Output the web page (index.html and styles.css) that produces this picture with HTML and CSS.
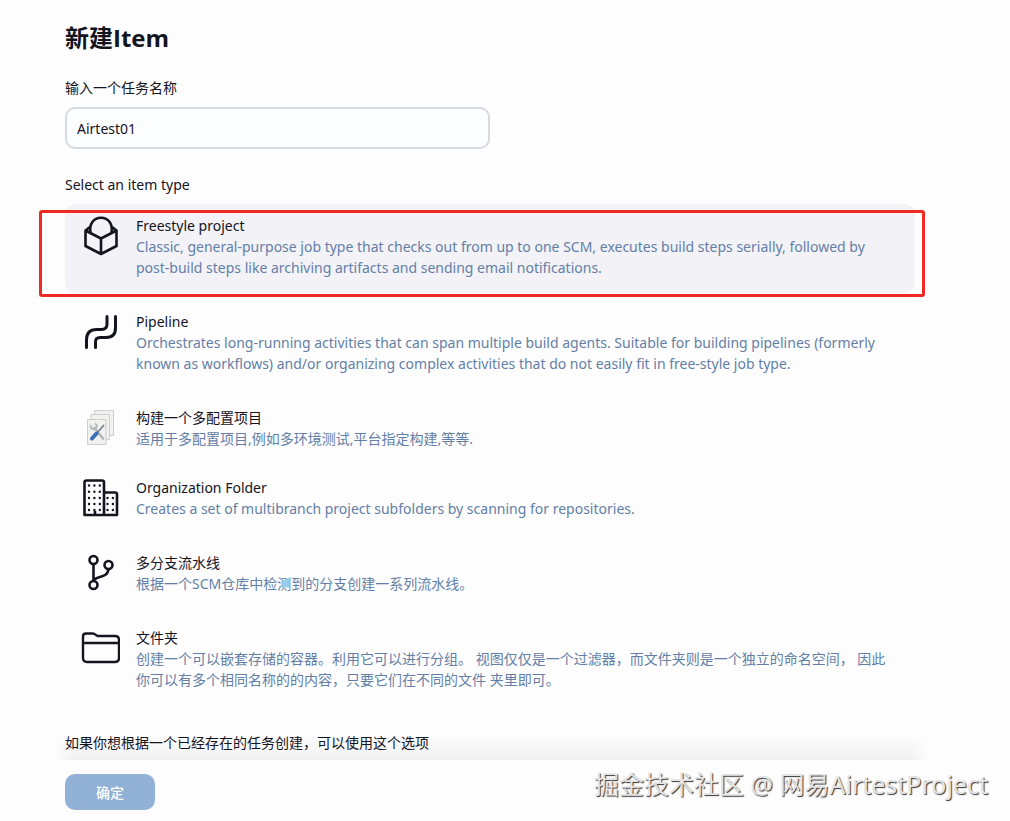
FILE: index.html
```html
<!DOCTYPE html>
<html lang="zh-CN">
	<head>
		<meta charset="UTF-8">
		<title>新建Item</title>
		<link rel="stylesheet" href="styles.css">
	</head>
	<body>
		<form class="new-item">
			<h1>新建Item</h1>

			<label class="caption" for="name">输入一个任务名称</label>
			<input class="name" type="text" id="name" name="name" value="Airtest01">

			<h2 class="caption" id="types">Select an item type</h2>
			<ul class="items" aria-labelledby="types">
				<li class="item active">
					<input type="radio" name="mode" value="freestyle" id="mode_freestyle" checked>
					<label for="mode_freestyle">
						<svg class="icon" viewBox="0 0 40 40" fill="none" stroke="#14141f" stroke-width="2.6" stroke-linejoin="round">
							<path d="M10.500 16.500C9 8 13.500 1.800 21 1.800S33 8 31.500 16.500"/>
							<path d="M10 11l-4.500 3.500V30L21 38l15.500-8V14.500L32 11M5.500 14.500L21 22.500l15.500-8M21 22.500V38"/>
						</svg>
						<span class="text">
							<span class="title">Freestyle project</span>
							<span class="desc">Classic, general-purpose job type that checks out from up to one SCM, executes build steps serially, followed by post-build steps like archiving artifacts and sending email notifications.</span>
						</span>
					</label>
				</li>
				<li class="item">
					<input type="radio" name="mode" value="pipeline" id="mode_pipeline">
					<label for="mode_pipeline">
						<svg class="icon" viewBox="0 0 40 40" fill="none" stroke="#14141f" stroke-width="3" stroke-linecap="round">
							<path d="M6.500 35.500V28q0-10.500 10-10.500h5q5.500 0 5.500-5.500V4.500"/>
							<path d="M15.500 35.500V30q0-4.500 4.500-4.500h6q9.500 0 9.500-9.500V4.500"/>
						</svg>
						<span class="text">
							<span class="title">Pipeline</span>
							<span class="desc">Orchestrates long-running activities that can span multiple build agents. Suitable for building pipelines (formerly known as workflows) and/or organizing complex activities that do not easily fit in free-style job type.</span>
						</span>
					</label>
				</li>
				<li class="item compact">
					<input type="radio" name="mode" value="matrix" id="mode_matrix">
					<label for="mode_matrix">
						<svg class="icon" viewBox="0 0 40 40" fill="none">
							<g fill="#f1f1f0" stroke="#c4c4c4" stroke-width="0.8">
								<path d="M14.500 2.500h19v25h-19z"/>
								<path d="M11 6.500h18.500v25H11z"/>
								<path d="M7.500 11.500h18.500v25H7.500z"/>
							</g>
							<path d="M14.500 20l8.500 10.500" stroke="#b4b7ba" stroke-width="2.600" stroke-linecap="round"/>
							<path d="M11 17a3 3 0 1 0 4-1.500" stroke="#b4b7ba" stroke-width="1.800"/>
							<path d="M24 17l-7 8" stroke="#777c82" stroke-width="1.600"/>
							<path d="M16.500 25.500l-4.500 5" stroke="#3d6db5" stroke-width="4" stroke-linecap="round"/>
						</svg>
						<span class="text">
							<span class="title">构建一个多配置项目</span>
							<span class="desc">适用于多配置项目,例如多环境测试,平台指定构建,等等.</span>
						</span>
					</label>
				</li>
				<li class="item">
					<input type="radio" name="mode" value="organization" id="mode_organization">
					<label for="mode_organization">
						<svg class="icon" viewBox="0 0 40 40" fill="none" stroke="#14141f" stroke-width="2.600" stroke-linejoin="round">
							<path d="M4.500 37V4.500q0-2 2-2h15.500q2 0 2 2V37zM24 14.500h11q2 0 2 2V37H24M15 37v-4"/>
							<g stroke-width="2.400" stroke-linecap="round" stroke-dasharray="0 5.400">
								<path d="M9 7.500h11M9 13.700h11M9 20h11M9 26h11M9 32h11"/>
								<path d="M27.500 20h5.600M27.500 26h5.600M27.500 32h5.600"/>
							</g>
						</svg>
						<span class="text">
							<span class="title">Organization Folder</span>
							<span class="desc">Creates a set of multibranch project subfolders by scanning for repositories.</span>
						</span>
					</label>
				</li>
				<li class="item">
					<input type="radio" name="mode" value="multibranch" id="mode_multibranch">
					<label for="mode_multibranch">
						<svg class="icon" viewBox="0 0 40 40" fill="none" stroke="#14141f" stroke-width="2.600">
							<circle cx="13.500" cy="7" r="4"/>
							<circle cx="28.500" cy="12" r="4"/>
							<circle cx="13.500" cy="32" r="4"/>
							<path d="M13.500 11v17M13.500 28c2-6 14-2 15-12"/>
						</svg>
						<span class="text">
							<span class="title">多分支流水线</span>
							<span class="desc">根据一个SCM仓库中检测到的分支创建一系列流水线。</span>
						</span>
					</label>
				</li>
				<li class="item">
					<input type="radio" name="mode" value="folder" id="mode_folder">
					<label for="mode_folder">
						<svg class="icon" viewBox="0 0 40 40" fill="none" stroke="#14141f" stroke-width="2.400" stroke-linejoin="round">
							<path d="M3 8.500q0-3 3-3h6.500q2 0 3.500 1.500l1.500 1H35q4 0 4 4V30q0 4-4 4H7q-4 0-4-4zM3 15h36"/>
						</svg>
						<span class="text">
							<span class="title">文件夹</span>
							<span class="desc">创建一个可以嵌套存储的容器。利用它可以进行分组。 视图仅仅是一个过滤器，而文件夹则是一个独立的命名空间， 因此你可以有多个相同名称的的内容，只要它们在不同的文件 夹里即可。</span>
						</span>
					</label>
				</li>
			</ul>

			<p class="copy">如果你想根据一个已经存在的任务创建，可以使用这个选项</p>
			<div class="footer">
				<button type="submit">确定</button>
				<span class="credit">掘金技术社区 @ 网易AirtestProject</span>
			</div>
		</form>
	</body>
</html>
```
FILE: styles.css
```css
body {
	margin: 0;
	background: #fdfdfe;
	color: #14141f;
	font: 14px/21px "Noto Sans", "Noto Sans CJK SC", sans-serif;
}
h1, h2, ul, p {
	margin: 0;
	padding: 0;
	font-weight: normal;
	list-style-type: none;
}
.new-item {
	padding: 22px 22px 0 65px;
}
h1 {
	margin-bottom: 24px;
	font-family: "Open Sans", "Noto Sans CJK SC", sans-serif;
	font-size: 24px;
	line-height: 32px;
	font-weight: bold;
}
.caption {
	display: block;
	font-size: 14px;
	line-height: 20px;
}
.name {
	display: block;
	box-sizing: border-box;
	width: 50%;
	max-width: 425px;
	height: 42px;
	margin: 9px 0 26px;
	padding: 0 10px;
	border: 2px solid #d5dae2;
	border-radius: 10px;
	background: #fcfdfe;
	color: inherit;
	font: inherit;
}
.items {
	display: flex;
	flex-direction: column;
	gap: 7px;
	max-width: 850px;
	margin-top: 9px;
}
.item {
	position: relative;
	border-radius: 10px;
}
.item input {
	position: absolute;
	opacity: 0;
}
.item label {
	display: flex;
	gap: 16px;
	padding: 11px 20px 15px 15px;
}
.item.compact label {
	padding-bottom: 10px;
}
.item.active {
	background: #f2f2f7;
}
/* red frame around the chosen type */
.item.active::after {
	content: "";
	position: absolute;
	top: 6px;
	right: -10px;
	bottom: -4px;
	left: -26px;
	border: 3px solid #ee2a22;
	border-radius: 3px;
}
.icon {
	flex: none;
	width: 40px;
	height: 40px;
	margin-top: 1px;
}
.title, .desc {
	display: block;
}
.desc {
	color: #647fa6;
}
/* soft shadow above the footer, fading out at both ends */
.copy {
	max-width: 864px;
	margin-left: -12px;
	padding: 27px 0 7px 12px;
	background:
		linear-gradient(to right, #fdfdfe, transparent 20px),
		linear-gradient(to left, #fdfdfe, transparent 20px),
		linear-gradient(transparent 50%, #f1f1f2);
}
.footer {
	display: flex;
	justify-content: space-between;
	align-items: flex-start;
}
button {
	width: 90px;
	height: 36px;
	margin-top: 14px;
	border: none;
	border-radius: 10px;
	background: #91b1d6;
	color: #fff;
	font: inherit;
	font-weight: 500;
}
.credit {
	color: #e4e4e4;
	font-size: 25px;
	line-height: 48px;
	text-shadow: 1px 1px 1px #333;
}
```
